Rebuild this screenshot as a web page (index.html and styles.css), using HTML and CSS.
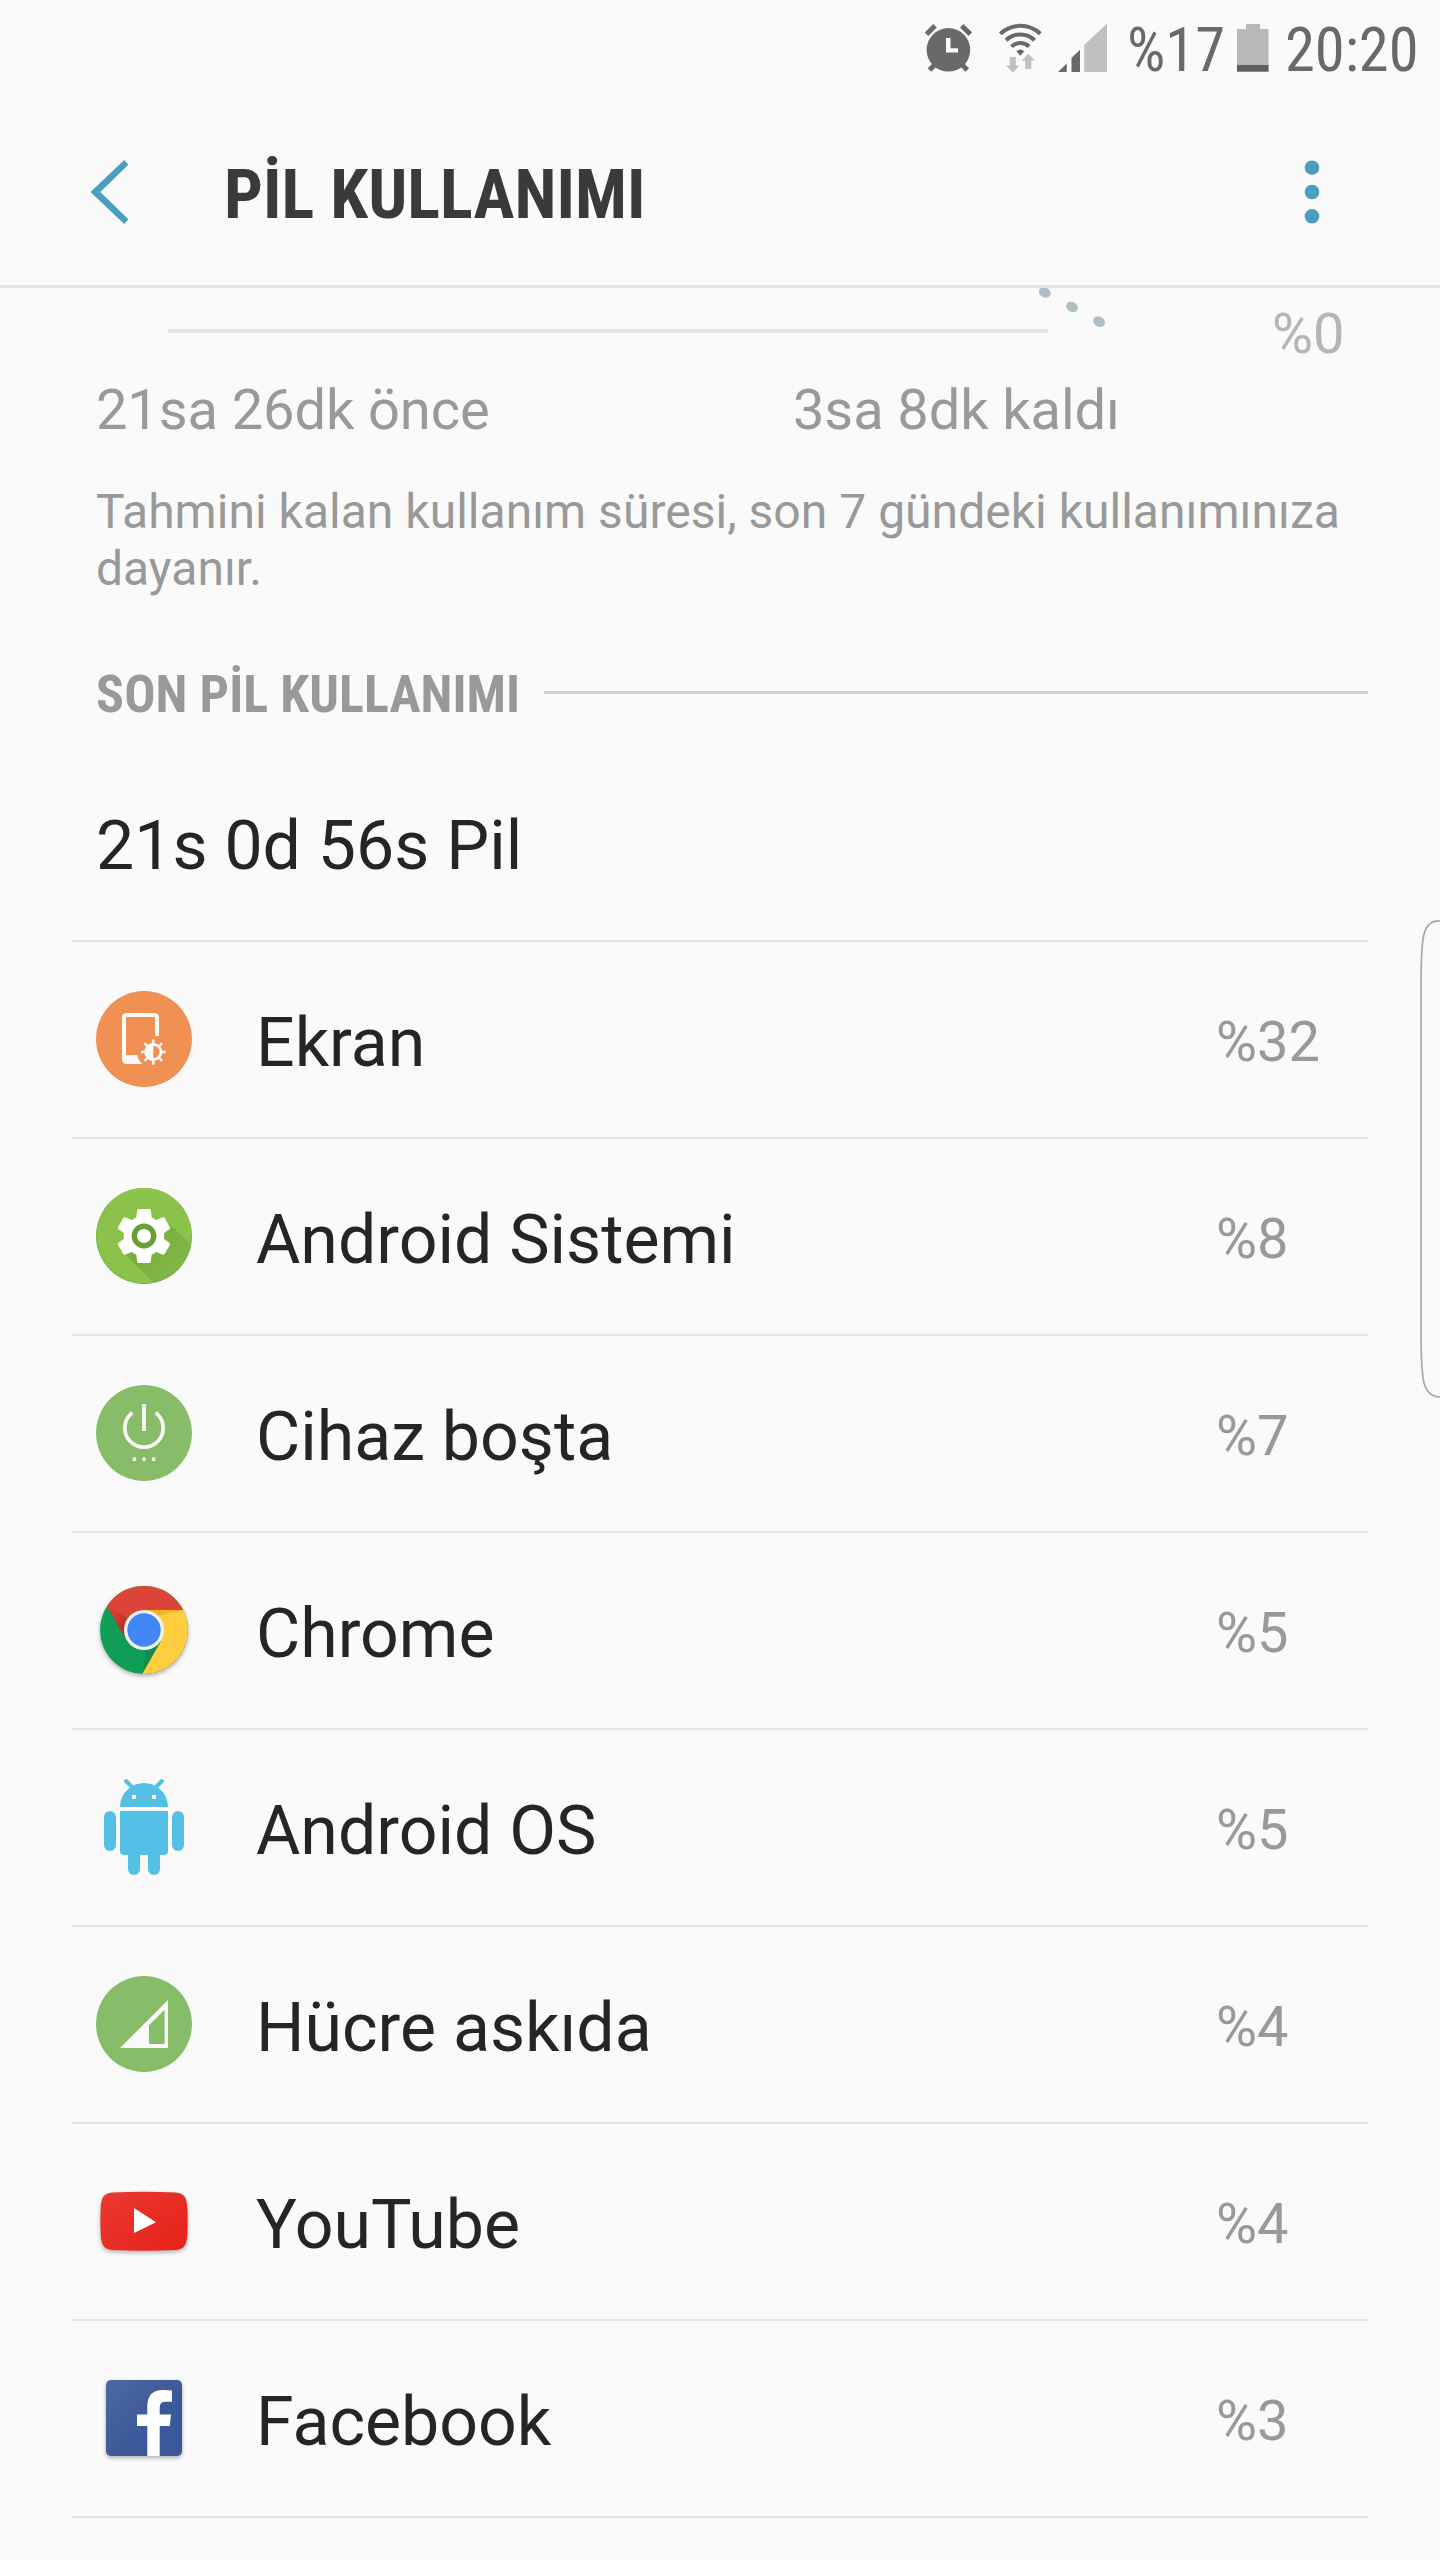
FILE: index.html
```html
<!DOCTYPE html>
<html lang="tr">
<head>
  <meta charset="UTF-8">
  <title>Pil kullanımı</title>
  <link rel="stylesheet" href="styles.css">
</head>
<body>
  <div class="status-bar">
    <svg class="alarm" width="49" height="50" viewBox="924 23 49 50">
      <circle cx="948.4" cy="49.8" r="21.8" fill="#696969"/>
      <path d="M926.5 34.3l8.5-8.5M961.8 25.8l8.5 8.5M929.5 70l7-7M967.3 70l-7-7" stroke="#696969" stroke-width="5"/>
      <path d="M946 38h4.5v10.2h7.5v4.4h-12z" fill="#fafafa"/>
    </svg>
    <svg class="wifi" width="43" height="50" viewBox="999 23 43 50">
      <g fill="none" stroke="#696969" stroke-width="4">
        <path d="M1000.3 33.8a29 29 0 0 1 40 0"/>
        <path d="M1006 40.2a20.5 20.5 0 0 1 28.6 0"/>
        <path d="M1011.5 46.6a12.5 12.5 0 0 1 17.6 0"/>
      </g>
      <path d="M1016.3 51.3q4-3.600 8 0l-4 4.400z" fill="#696969"/>
      <path d="M1009.8 57h6v8.500h3.800l-6.800 7-6.800-7h3.800zM1025.3 69h6v-8.500h3.800l-6.800-6.500-6.800 6.500h3.800z" fill="#c0c0c0"/>
    </svg>
    <svg class="signal" width="49" height="50" viewBox="1058 23 49 50">
      <path d="M1058 72l8.7-8.5V72zM1071.5 72V58l8.5-8.2V72z" fill="#696969"/>
      <path d="M1084.2 72V45l22.8-21.6V72z" fill="#c0c0c0"/>
    </svg>
    <div class="level"><span class="condensed">%17</span></div>
    <svg class="battery" width="32" height="50" viewBox="1237 23 32 50">
      <path d="M1237 29h9v-5h14v5h8.5v43H1237z" fill="#b8b8b8"/>
      <path d="M1237 65h31.5v6.5H1237z" fill="#5f5f5f"/>
    </svg>
    <div class="clock"><span class="condensed">20:20</span></div>
  </div>

  <div class="header">
    <svg class="back" width="40" height="66" viewBox="90 159 40 66">
      <path d="M124.2 160l4.2 4.8L100.3 192l28.1 27.2-4.2 4.8L90.5 192z" fill="#4a9fbf"/>
    </svg>
    <h1 class="condensed">PİL KULLANIMI</h1>
    <svg class="menu" width="16" height="66" viewBox="0 0 16 66">
      <g fill="#4a9fbf">
        <circle cx="8" cy="8.7" r="7.3"/>
        <circle cx="8" cy="33" r="7.3"/>
        <circle cx="8" cy="57.3" r="7.3"/>
      </g>
    </svg>
  </div>

  <div class="chart">
    <svg width="1272" height="89" viewBox="0 288 1272 89">
      <path d="M96 288h892v14H96z" fill="#f9f9f9"/>
      <path d="M168 329h880v4H168z" fill="#e6e6e6"/>
      <g fill="#b0bec5">
        <ellipse cx="1044.8" cy="292.3" rx="6.2" ry="5" transform="rotate(30 1044.8 292.3)"/>
        <ellipse cx="1072" cy="307" rx="6.2" ry="5" transform="rotate(30 1072 307)"/>
        <ellipse cx="1099" cy="321.7" rx="6.2" ry="5" transform="rotate(30 1099 321.7)"/>
      </g>
    </svg>
    <span class="axis-label">%0</span>
  </div>
  <div class="times">
    <span class="ago">21sa 26dk önce</span>
    <span>3sa 8dk kaldı</span>
  </div>
  <p class="note">Tahmini kalan kullanım süresi, son 7 gündeki kullanımınıza dayanır.</p>

  <div class="section">
    <h2 class="condensed">SON PİL KULLANIMI</h2>
    <div class="line"></div>
  </div>

  <div class="list">
    <div class="total">21s 0d 56s Pil</div>

    <div class="row">
      <svg class="icon" viewBox="0 0 96 96">
        <circle cx="48" cy="48" r="48" fill="#f09052"/>
        <path d="M61 45V27q0-3-3-3H31q-3 0-3 3v41q0 3 3 3h10" fill="none" stroke="#fafafa" stroke-width="4"/>
        <path d="M28 64h13.5q.5 5.500 5 9H31q-3 0-4-3z" fill="#fafafa"/>
        <circle cx="57.3" cy="61" r="7.6" fill="none" stroke="#fafafa" stroke-width="2.8"/>
        <path d="M57.3 53a8 8 0 0 0 0 16z" fill="#fafafa"/>
        <path d="M57.3 48.3v5M57.3 68.7v5M44.8 61h5M64.8 61h5M48.5 52.2l3.5 3.5M62.6 66.3l3.5 3.5M66.1 52.2l-3.5 3.5M52 66.3l-3.5 3.5" stroke="#fafafa" stroke-width="2.4"/>
      </svg>
      <span class="name">Ekran</span>
      <span class="percent">%32</span>
    </div>

    <div class="row">
      <svg class="icon" viewBox="0 0 96 96">
        <defs>
          <linearGradient id="gearShade" x1="35" y1="35" x2="80" y2="80" gradientUnits="userSpaceOnUse">
            <stop offset="0" stop-color="#689f38" stop-opacity=".75"/>
            <stop offset="1" stop-color="#689f38" stop-opacity=".3"/>
          </linearGradient>
          <clipPath id="gearClip"><circle cx="48" cy="48" r="48"/></clipPath>
        </defs>
        <circle cx="48" cy="48" r="48" fill="#74a840"/>
        <circle cx="48" cy="47.5" r="47.5" fill="#8bc34a"/>
        <path d="M24 61l36 36h36V57L70 33z" fill="url(#gearShade)" clip-path="url(#gearClip)"/>
        <path transform="translate(14.4 14.4) scale(2.8)" d="M19.14 12.94c.04-.3.06-.61.06-.94 0-.32-.02-.64-.07-.94l2.03-1.58c.18-.14.23-.41.12-.61l-1.92-3.32c-.12-.22-.37-.29-.59-.22l-2.39.96c-.5-.38-1.03-.7-1.62-.94l-.36-2.54c-.04-.24-.24-.41-.48-.41h-3.84c-.24 0-.43.17-.47.41l-.36 2.54c-.59.24-1.13.57-1.62.94l-2.39-.96c-.22-.08-.47 0-.59.22L2.74 8.87c-.12.21-.08.47.12.61l2.03 1.58c-.05.3-.09.63-.09.94s.02.64.07.94l-2.03 1.58c-.18.14-.23.41-.12.61l1.92 3.32c.12.22.37.29.59.22l2.39-.96c.5.38 1.03.7 1.62.94l.36 2.54c.05.24.24.41.48.41h3.84c.24 0 .44-.17.47-.41l.36-2.54c.59-.24 1.13-.56 1.62-.94l2.39.96c.22.08.47 0 .59-.22l1.92-3.32c.12-.22.07-.47-.12-.61l-2.01-1.58z" fill="#fff"/>
        <circle cx="48" cy="48" r="9.7" fill="#fff" stroke="#689f38" stroke-width="5.4"/>
      </svg>
      <span class="name">Android Sistemi</span>
      <span class="percent">%8</span>
    </div>

    <div class="row">
      <svg class="icon" viewBox="0 0 96 96">
        <circle cx="48" cy="48" r="48" fill="#87bd68"/>
        <path d="M36.3 27.8A19.2 19.2 0 1 0 59.7 27.8" fill="none" stroke="#fafafa" stroke-width="3.7"/>
        <path d="M46.1 19h3.8v27h-3.800zM36.7 72.6h3.4V76h-3.400zM46.3 72.6h3.4V76h-3.400zM55.9 72.6h3.4V76h-3.400z" fill="#fafafa"/>
      </svg>
      <span class="name">Cihaz boşta</span>
      <span class="percent">%7</span>
    </div>

    <div class="row">
      <svg class="icon chrome" viewBox="0 0 96 96">
        <defs>
          <clipPath id="chromeClip"><circle cx="48" cy="48" r="44"/></clipPath>
          <linearGradient id="redShade" x1="12" y1="24" x2="34" y2="48" gradientUnits="userSpaceOnUse">
            <stop offset="0" stop-color="#a52714" stop-opacity="0"/>
            <stop offset="1" stop-color="#a52714" stop-opacity=".7"/>
          </linearGradient>
        </defs>
        <g clip-path="url(#chromeClip)">
          <path d="M0 0h96v96H0z" fill="#0f9d58"/>
          <path d="M48 28h48v68H44l21-37z" fill="#ffcd40"/>
          <path d="M0 0h96v28H48L28.5 54.5 10.8 24z" fill="#db4437"/>
          <path d="M10.8 24l17.7 31 5-18z" fill="url(#redShade)"/>
          <path d="M48 28h38L61 34z" fill="#ea9a00" opacity=".5"/>
          <path d="M64.5 60L47 90l3-24z" fill="#263238" opacity=".15"/>
        </g>
        <circle cx="48" cy="48" r="20" fill="#f1f1f1"/>
        <circle cx="48" cy="48" r="16.7" fill="#4285f4"/>
      </svg>
      <span class="name">Chrome</span>
      <span class="percent">%5</span>
    </div>

    <div class="row">
      <svg class="icon" viewBox="0 0 96 96">
        <g fill="#55c0e6">
          <path d="M24 28a24 24 0 0 1 48 0z"/>
          <path d="M30 2l7 7M66 2l-7 7" stroke="#55c0e6" stroke-width="4" stroke-linecap="round"/>
          <path d="M24 32h48v40q0 4-4 4H28q-4 0-4-4z"/>
          <rect x="8" y="32" width="12" height="40" rx="6"/>
          <rect x="76" y="32" width="12" height="40" rx="6"/>
          <rect x="32" y="66" width="12" height="30" rx="6"/>
          <rect x="52" y="66" width="12" height="30" rx="6"/>
        </g>
        <path d="M36 16h4v4h-4zM56 16h4v4h-4z" fill="#fafafa"/>
      </svg>
      <span class="name">Android OS</span>
      <span class="percent">%5</span>
    </div>

    <div class="row">
      <svg class="icon" viewBox="0 0 96 96">
        <circle cx="48" cy="48" r="48" fill="#87bd68"/>
        <path d="M72 24v48H24z" fill="#fafafa"/>
        <path d="M53 49.3l15.6-15.6V68H53z" fill="#87bd68"/>
      </svg>
      <span class="name">Hücre askıda</span>
      <span class="percent">%4</span>
    </div>

    <div class="row">
      <svg class="icon shadow" viewBox="0 0 96 96">
        <defs>
          <linearGradient id="ytRed" x1="0" y1="0" x2="1" y2="1">
            <stop offset="0" stop-color="#e83a32"/>
            <stop offset="1" stop-color="#e62117"/>
          </linearGradient>
        </defs>
        <path d="M16 19.5Q48 18 80 19.5 90 20 91 31q1.3 17 0 34.5-1 11-11 11.5-32 1.5-64 0Q6 76.5 5 65.5q-1.3-17 0-34.5Q6 20 16 19.5z" fill="url(#ytRed)"/>
        <path d="M38 35l22 14.2L38 60z" fill="#fff"/>
      </svg>
      <span class="name">YouTube</span>
      <span class="percent">%4</span>
    </div>

    <div class="row">
      <svg class="icon shadow" viewBox="0 0 96 96">
        <defs>
          <linearGradient id="fbBlue" x1="0" y1="0" x2=".6" y2=".6">
            <stop offset="0" stop-color="#4e69a2"/>
            <stop offset="1" stop-color="#3b5998"/>
          </linearGradient>
        </defs>
        <rect x="10" y="10" width="76" height="76" rx="5" fill="url(#fbBlue)"/>
        <path d="M51.3 86V56H41V44.5h10.3V36q0-15.5 15-16 5-.2 9.7.5v11.2h-6.500q-5.8 0-5.8 5.3v7.5H75L73.8 56H63.7v30z" fill="#fff"/>
      </svg>
      <span class="name">Facebook</span>
      <span class="percent">%3</span>
    </div>
  </div>

  <!-- edge panel handle -->
  <svg class="edge" width="22" height="482" viewBox="0 0 22 482">
    <path d="M22 3Q10 2 6 16Q3 28 3 70V410Q3 452 6 465Q10 479 22 479" fill="none" stroke="#aaa" stroke-width="1.7"/>
  </svg>
</body>
</html>
```
FILE: styles.css
```css
body {
  position: relative;
  width: 1440px;
  height: 2560px;
  margin: 0;
  overflow: hidden;
  background-color: #fafafa;
  color: #252525;
  font-family: Roboto, sans-serif;
}
svg {
  display: block;
  flex: none;
}
h1, h2, p {
  margin: 0;
}
.condensed {
  display: block;
  font-family: "Roboto Condensed", Roboto, sans-serif;
  font-stretch: 75%;
  white-space: nowrap;
}

/* Status bar */
.status-bar {
  display: flex;
  box-sizing: border-box;
  height: 96px;
  padding: 23px 0 0 924px;
  color: #696969;
  font-size: 60.5px;
  line-height: 56px;
}
.wifi {
  margin-left: 26px;
}
.signal {
  margin-left: 16px;
}
.level {
  width: 98px;
  margin-left: 20px;
}
.battery {
  margin-left: 12px;
}
.clock {
  margin-left: 16px;
}

/* Header */
.header {
  display: flex;
  align-items: center;
  box-sizing: border-box;
  height: 192px;
  padding: 3px 120px 0 90px;
  border-bottom: 3px solid #e6e6e6;
}
.header h1 {
  flex: 1;
  margin-left: 94px;
  padding-top: 5px;
  color: #3a3a3a;
  font-size: 68.5px;
  line-height: 80px;
  letter-spacing: .05px;
}

/* Chart */
.chart {
  display: flex;
  height: 89px;
}
.axis-label {
  padding-top: 16px;
  color: #b5b5b5;
  font-size: 56px;
  line-height: 60px;
}
.times {
  display: flex;
  padding-left: 96px;
  color: #999;
  font-size: 56px;
  line-height: 66px;
  letter-spacing: -.1px;
}
.ago {
  width: 697px;
}
.note {
  padding: 40px 96px 0;
  color: #999;
  font-size: 48px;
  line-height: 57px;
  letter-spacing: .02px;
}

/* List */
.section {
  display: flex;
  padding: 67px 72px 0 96px;
}
.section h2 {
  width: 448px;
  padding-top: 1px;
  color: #999;
  font-size: 52px;
  line-height: 60px;
  letter-spacing: .08px;
}
.line {
  flex: 1;
  height: 3px;
  margin-top: 27px;
  background-color: #d0d0d0;
}
.list {
  margin: 0 72px;
}
.total {
  height: 134px;
  padding: 81px 0 0 24px;
  border-bottom: 2px solid #e6e6e6;
  font-size: 68px;
  line-height: 80px;
}
.row {
  display: flex;
  box-sizing: border-box;
  height: 197px;
  padding-left: 24px;
  border-bottom: 2px solid #e6e6e6;
}
.icon {
  width: 96px;
  height: 96px;
  margin-top: 49px;
  overflow: visible;
}
.chrome, .shadow {
  filter: drop-shadow(0 2px 2px rgba(0, 0, 0, .3));
}
.name {
  flex: 1;
  padding: 61px 0 0 64px;
  font-size: 68px;
  line-height: 80px;
}
.percent {
  width: 152px;
  padding-top: 60px;
  color: #999;
  font-size: 56px;
  line-height: 80px;
}

.edge {
  position: absolute;
  top: 918px;
  right: 0;
}
```
